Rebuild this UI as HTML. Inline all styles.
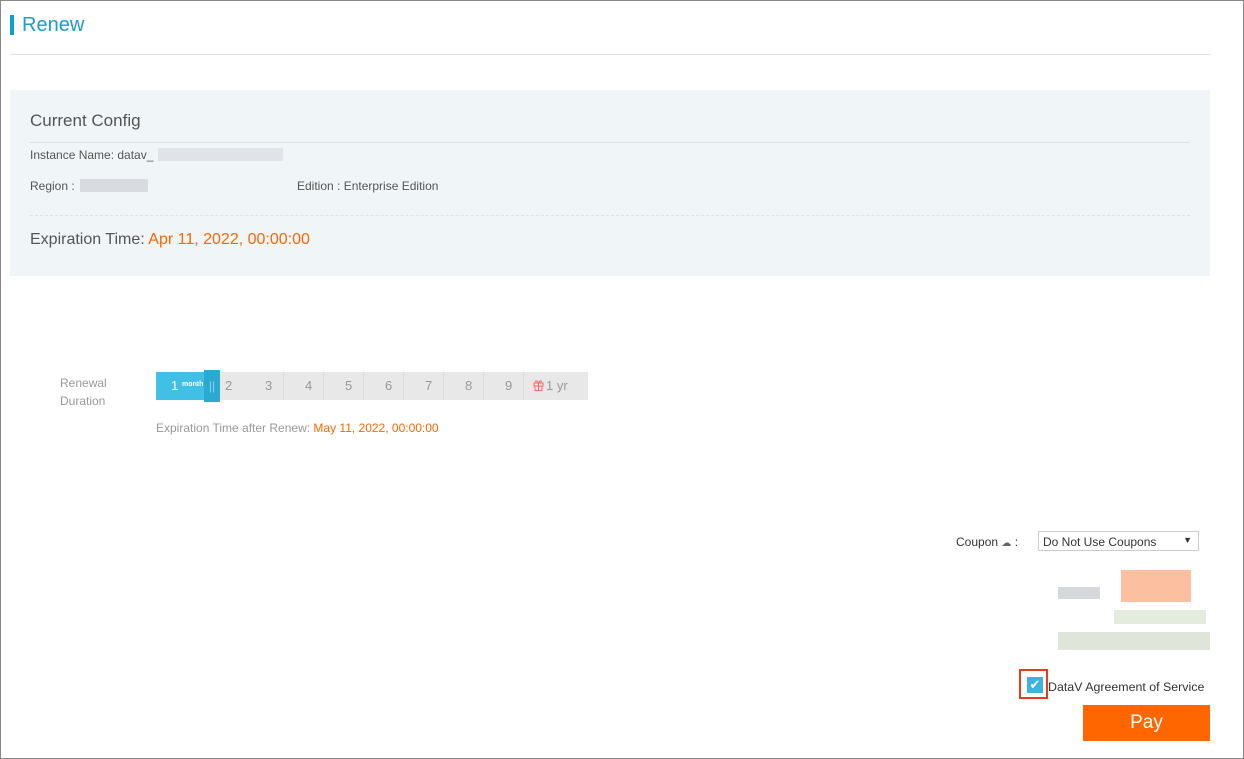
<!DOCTYPE html>
<html><head><meta charset="utf-8"><style>
*{margin:0;padding:0;box-sizing:border-box}
body{width:1244px;height:759px;font-family:"Liberation Sans",sans-serif;background:#fff;position:relative;overflow:hidden}
.frame{position:absolute;left:0;top:0;width:1244px;height:759px;border:1px solid #888}
.a{position:absolute;white-space:nowrap}
.blur{position:absolute;background:#dcdfe3}
</style></head><body>
<div class="frame"></div>
<div class="a" style="left:10px;top:15px;width:4px;height:20px;background:#0aa0d0"></div>
<div class="a" style="left:22px;top:14px;font-size:20px;color:#1a9ccc">Renew</div>
<div class="a" style="left:10px;top:54px;width:1200px;height:1px;background:#e2e2e2"></div>
<div class="a" style="left:10px;top:90px;width:1200px;height:186px;background:#f0f5f8"></div>
<div class="a" style="left:30px;top:111px;font-size:17px;color:#555">Current Config</div>
<div class="a" style="left:30px;top:142px;width:1160px;height:1px;background:#dbe3ea"></div>
<div class="a" style="left:30px;top:148px;font-size:12px;color:#555">Instance Name: datav_</div>
<div class="blur" style="left:158px;top:148px;width:125px;height:13px;background:#e0e3e7"></div>
<div class="a" style="left:30px;top:179px;font-size:12px;color:#555">Region :</div>
<div class="blur" style="left:80px;top:179px;width:68px;height:13px;background:#d8dbdf"></div>
<div class="a" style="left:297px;top:179px;font-size:12px;color:#555">Edition : Enterprise Edition</div>
<div class="a" style="left:30px;top:215px;width:1160px;border-top:1px dashed #dde3e8"></div>
<div class="a" style="left:30px;top:231px;font-size:16px;color:#555">Expiration Time: <span style="color:#f60">Apr 11, 2022, 00:00:00</span></div>

<div class="a" style="left:60px;top:374px;font-size:12px;color:#999;line-height:18px">Renewal<br>Duration</div>
<div class="a" style="left:156px;top:372px;width:432px;height:28px;background:#e8e8e8"></div>
<div class="a" style="left:156px;top:372px;width:48px;height:28px;background:#40c0e4;color:#fff"><span style="position:absolute;left:15px;top:6px;font-size:13px">1</span><span style="position:absolute;left:26px;top:9px;font-size:7px;font-weight:bold">month</span></div>
<div class="a" style="left:204px;top:370px;width:16px;height:32px;background:#2aaad2;color:#8fd3ea;font-size:12px;text-align:center;line-height:32px">||</div>
<div class="a" style="left:220px;top:372px;height:28px;font-size:13px;color:#999;line-height:28px">
<span style="position:absolute;left:5px">2</span>
<span style="position:absolute;left:45px">3</span>
<span style="position:absolute;left:85px">4</span>
<span style="position:absolute;left:125px">5</span>
<span style="position:absolute;left:165px">6</span>
<span style="position:absolute;left:205px">7</span>
<span style="position:absolute;left:245px">8</span>
<span style="position:absolute;left:285px">9</span>
<span style="position:absolute;left:313px"><svg width="11" height="12" viewBox="0 0 11 12" style="vertical-align:-1px;margin-right:2px"><rect x="1" y="4" width="9" height="3" fill="none" stroke="#f66"/><rect x="2" y="7" width="7" height="4.5" fill="none" stroke="#f66"/><path d="M5.5 4v8M5.5 4C4 1 2 1 3 3.5M5.5 4C7 1 9 1 8 3.5" fill="none" stroke="#f66"/></svg>1 yr</span>
</div>
<div class="a" style="left:283px;top:372px;width:1px;height:28px;background:#dcdcdc"></div>
<div class="a" style="left:323px;top:372px;width:1px;height:28px;background:#dcdcdc"></div>
<div class="a" style="left:363px;top:372px;width:1px;height:28px;background:#dcdcdc"></div>
<div class="a" style="left:403px;top:372px;width:1px;height:28px;background:#dcdcdc"></div>
<div class="a" style="left:443px;top:372px;width:1px;height:28px;background:#dcdcdc"></div>
<div class="a" style="left:483px;top:372px;width:1px;height:28px;background:#dcdcdc"></div>
<div class="a" style="left:523px;top:372px;width:1px;height:28px;background:#dcdcdc"></div>
<div class="a" style="left:156px;top:421px;font-size:12px;color:#999">Expiration Time after Renew: <span style="color:#f60">May 11, 2022, 00:00:00</span></div>

<div class="a" style="left:956px;top:535px;font-size:12px;color:#333">Coupon <span style="color:#666;font-size:10px">☁</span> :</div>
<div class="a" style="left:1038px;top:531px;width:161px;height:20px;border:1px solid #ccc;font-size:12px;color:#333;padding:3px 0 0 4px">Do Not Use Coupons<span style="position:absolute;right:6px;top:3px;font-size:9px">▼</span></div>
<div class="blur" style="left:1058px;top:587px;width:42px;height:12px;background:#d6d8dc"></div>
<div class="blur" style="left:1121px;top:570px;width:70px;height:32px;background:#fcc0a0"></div>
<div class="blur" style="left:1114px;top:610px;width:92px;height:14px;background:#e3ecdd"></div>
<div class="blur" style="left:1058px;top:632px;width:152px;height:18px;background:#dfe6d9"></div>
<div class="a" style="left:1019px;top:669px;width:29px;height:30px;border:2px solid #e53e1e"></div>
<div class="a" style="left:1027px;top:677px;width:16px;height:16px;background:#3cb4e0;color:#fff;font-size:13px;line-height:16px;text-align:center">✔</div>
<div class="a" style="left:1048px;top:680px;font-size:12.4px;color:#333">DataV Agreement of Service</div>
<div class="a" style="left:1083px;top:705px;width:127px;height:36px;background:#f60;color:#fff;font-size:19px;text-align:center;line-height:36px">Pay</div>
</body></html>
